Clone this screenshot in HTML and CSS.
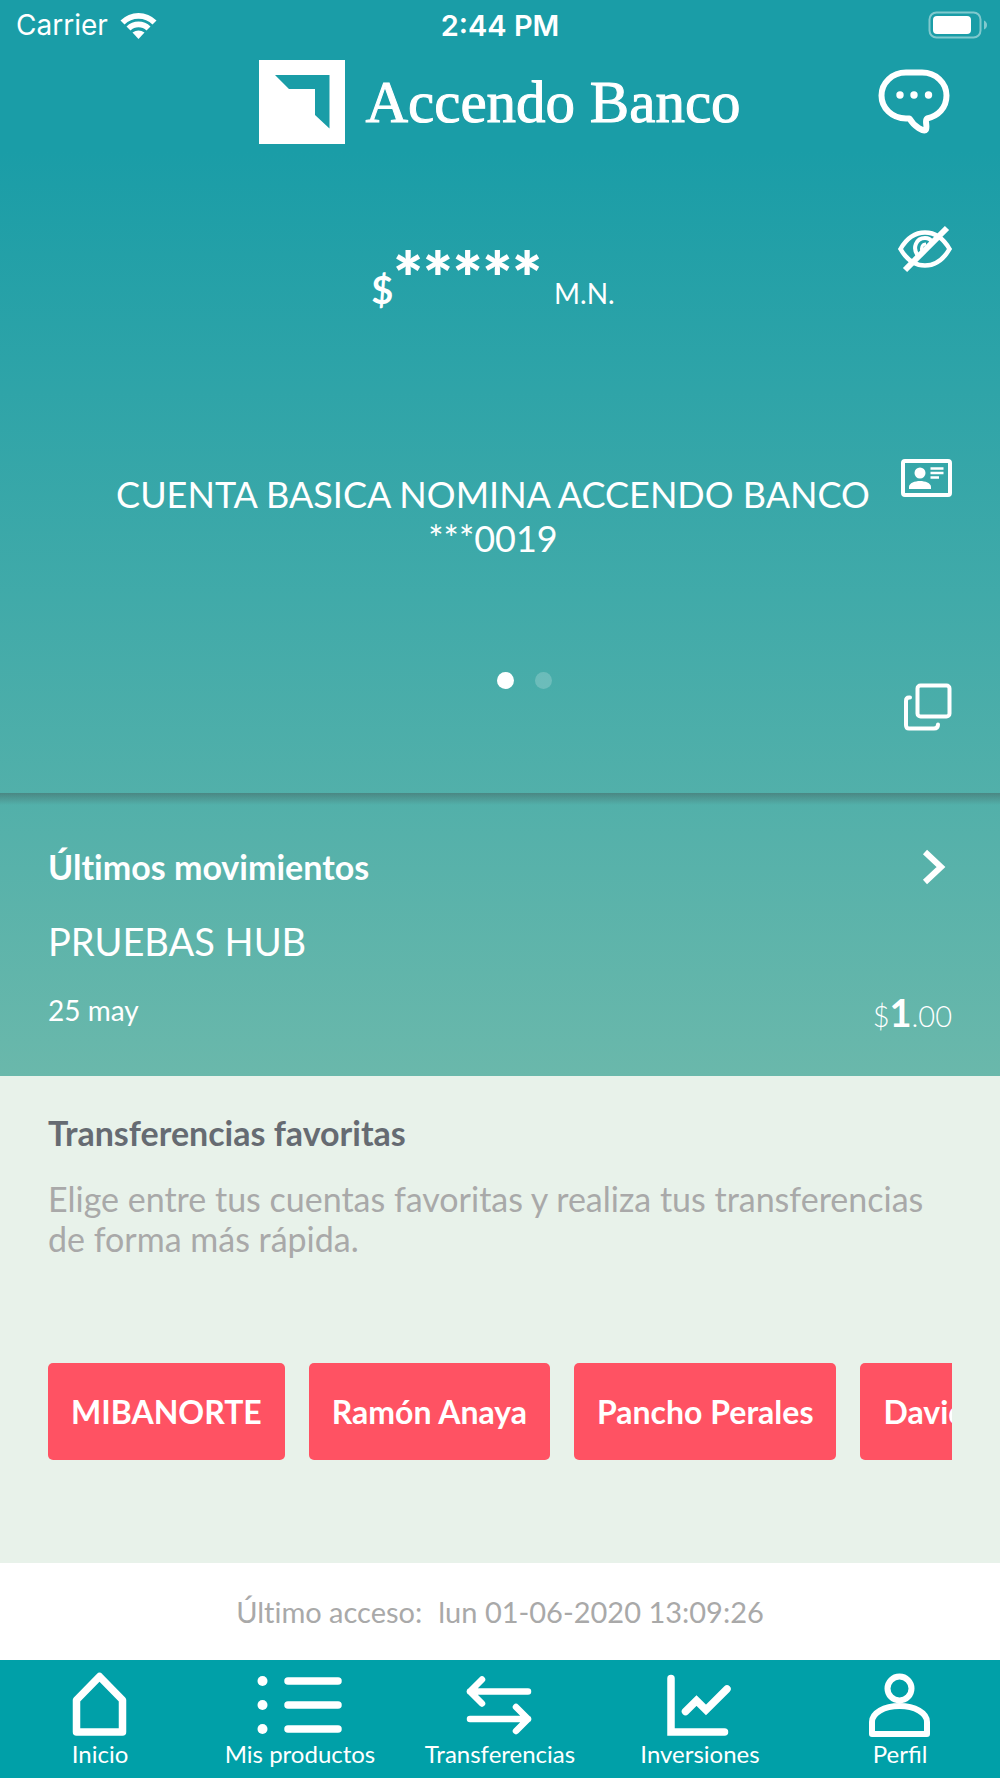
FILE: index.html
```html
<!DOCTYPE html>
<html lang="es">
<head>
    <meta charset="UTF-8">
    <meta name="viewport" content="width=device-width, initial-scale=1.0">
    <title>Accendo Banco</title>
    <link rel="stylesheet" href="styles.css">
</head>
<body>
    <div class="top">
        <div class="status-bar">
            <div class="carrier">
                <span>Carrier</span>
                <svg width="37" height="27" viewBox="0 0 37 27" fill="#fff">
                    <path d="M0.500 8.500A25.500 25.500 0 0 1 36.500 8.500L32.500 12.500A20 20 0 0 0 4.500 12.500Z"/>
                    <path d="M6.500 14.500A17 17 0 0 1 30.500 14.500L26.500 18.500A11.500 11.500 0 0 0 10.500 18.500Z"/>
                    <path d="M12.500 20.500Q18.500 16.500 24.500 20.500L18.500 27Z"/>
                </svg>
            </div>
            <div class="time">2:44 PM</div>
            <div class="battery">
                <svg width="60" height="28" viewBox="0 0 60 28">
                    <rect x="1.500" y="1.500" width="51" height="25" rx="7" fill="none" stroke="#fff" stroke-opacity="0.450" stroke-width="2"/>
                    <rect x="5" y="5" width="38" height="18" rx="4" fill="#fff"/>
                    <path d="M56 9.500Q59 11 59 14T56 18.500Z" fill="#fff" fill-opacity="0.450"/>
                </svg>
            </div>
        </div>

        <header class="header">
            <h1 class="logo">
                <svg width="86" height="84" viewBox="0 0 86 84">
                    <path fill="#fff" fill-rule="evenodd" d="M0 0H86V84H0ZM16 15L30 29H56V55L70.500 68.500V15Z"/>
                </svg>
                <span>Accendo Banco</span>
            </h1>
            <button class="icon-button chat" aria-label="Chat">
                <svg width="72" height="66" viewBox="0 0 72 66">
                    <path d="M28 3.500H44C58 3.500 68.500 14 68.500 26.500C68.500 39 60 47 49 49.500C46.500 51 49.500 57 48 60.500C46 63.500 36 57.500 31.500 49.500H28C14 49.500 3.500 39 3.500 26.500C3.500 14 14 3.500 28 3.500Z" fill="none" stroke="#fff" stroke-width="6" stroke-linejoin="round"/>
                    <circle cx="22" cy="26" r="3.700" fill="#fff"/>
                    <circle cx="36" cy="26" r="3.700" fill="#fff"/>
                    <circle cx="50.500" cy="26" r="3.700" fill="#fff"/>
                </svg>
            </button>
        </header>

        <section class="account">
            <div class="slide">
                <p class="balance">
                    <span class="currency">$</span><span class="amount">*****</span><span class="unit">M.N.</span>
                </p>
                <h2 class="account-name">
                    <span>CUENTA BASICA NOMINA ACCENDO BANCO</span>
                    <span>***0019</span>
                </h2>
            </div>
            <div class="actions">
                <button class="icon-button" aria-label="Mostrar saldo">
                    <svg width="54" height="48" viewBox="0 0 54 48" fill="none" stroke="#fff">
                        <path d="M2.500 24Q12 7.500 27 7.500T51.500 24Q42 40.500 27 40.500T2.500 24Z" stroke-width="4.500"/>
                        <path d="M20 31C14 23 18 13 27 13C31 13 33 15 34 17" stroke-width="4"/>
                        <path d="M28 19C24 19 22.500 23 24 27" stroke-width="3"/>
                        <path d="M7 45L49 3" stroke-width="6"/>
                    </svg>
                </button>
                <button class="icon-button" aria-label="Datos de la cuenta">
                    <svg width="52" height="40" viewBox="0 0 52 40">
                        <rect x="3" y="3" width="47" height="34" rx="2" fill="none" stroke="#fff" stroke-width="4"/>
                        <circle cx="20" cy="15" r="5.500" fill="#fff"/>
                        <path d="M9 31V29C9 25 15 23 20 23S31 25 31 29V31Z" fill="#fff"/>
                        <path d="M30.500 10.500H43.500M30.500 15H43.500M30.500 19.500H39" stroke="#fff" stroke-width="2.500"/>
                    </svg>
                </button>
                <button class="icon-button" aria-label="Copiar">
                    <svg width="48" height="48" viewBox="0 0 48 48" fill="none" stroke="#fff" stroke-width="4" stroke-linecap="round">
                        <rect x="13.500" y="2.500" width="32" height="31" rx="3"/>
                        <path d="M6 14.500H5Q2 14.500 2 18V42Q2 45.500 5 45.500H30Q34 45.500 34 41.500"/>
                    </svg>
                </button>
            </div>
            <div class="dots">
                <span class="dot active"></span>
                <span class="dot"></span>
            </div>
        </section>

        <section class="movements">
            <div class="row">
                <h2>Últimos movimientos</h2>
                <a href="#" class="more" aria-label="Ver movimientos">
                    <svg width="24" height="36" viewBox="0 0 24 36">
                        <path d="M3 3L19 18L3 33" fill="none" stroke="#fff" stroke-width="6"/>
                    </svg>
                </a>
            </div>
            <p class="concept">PRUEBAS HUB</p>
            <div class="row details">
                <span class="date">25 may</span>
                <span class="total">$<strong>1</strong>.00</span>
            </div>
        </section>
    </div>

    <section class="favorites">
        <h2>Transferencias favoritas</h2>
        <p>Elige entre tus cuentas favoritas y realiza tus transferencias de forma más rápida.</p>
        <div class="favorites-list">
            <button>MIBANORTE</button>
            <button>Ramón Anaya</button>
            <button>Pancho Perales</button>
            <button>David</button>
        </div>
    </section>

    <div class="last-access">
        <span>Último acceso:</span>
        <span>lun 01-06-2020 13:09:26</span>
    </div>

    <nav class="tabs">
        <a href="#">
            <svg width="88" height="66" viewBox="0 0 88 66" fill="none" stroke="#fff" stroke-width="7.500" stroke-linejoin="round">
                <path d="M43.500 5.500L66.500 29V61H20.500V29Z"/>
            </svg>
            Inicio
        </a>
        <a href="#">
            <svg width="88" height="66" viewBox="0 0 88 66" fill="#fff">
                <circle cx="6.500" cy="10" r="5"/>
                <circle cx="6.500" cy="34" r="5"/>
                <circle cx="6.500" cy="58" r="5"/>
                <path d="M32 10H82M32 34H82M32 58H82" stroke="#fff" stroke-width="7.500" stroke-linecap="round"/>
            </svg>
            Mis productos
        </a>
        <a href="#">
            <svg width="88" height="66" viewBox="0 0 88 66" fill="none" stroke="#fff" stroke-width="6.500" stroke-linecap="round" stroke-linejoin="round">
                <path d="M72 20.500H14M26 8.500L14 20.500L26 32.500"/>
                <path d="M14 48H72M60 36L72 48L60 60"/>
            </svg>
            Transferencias
        </a>
        <a href="#">
            <svg width="88" height="66" viewBox="0 0 88 66" fill="none" stroke="#fff" stroke-width="7.500" stroke-linecap="round">
                <path d="M15 7.500V61H68.500"/>
                <path d="M29.500 40.500L40.500 29.500L50 39L71 18"/>
            </svg>
            Inversiones
        </a>
        <a href="#">
            <svg width="88" height="66" viewBox="0 0 88 66" fill="none" stroke="#fff" stroke-width="6" stroke-linejoin="round">
                <circle cx="43.500" cy="17.500" r="12"/>
                <path d="M16 63V51C16 42 28 35 43.500 35S71 42 71 51V63Z"/>
            </svg>
            Perfil
        </a>
    </nav>
</body>
</html>
```
FILE: styles.css
```css
* {
    box-sizing: border-box;
}

body {
    font-family: Lato, sans-serif;
    font-variant-ligatures: no-common-ligatures;
    margin: 0;
    background-color: #fff;
    color: #fff;
}

h1, h2, p {
    margin: 0;
}

svg {
    display: block;
}

button {
    font-family: inherit;
    border: none;
    cursor: pointer;
}

a {
    color: inherit;
    text-decoration: none;
}

.top {
    background: linear-gradient(#1a9da7 14%, #6ab8ab);
}

/* Status bar */
.status-bar {
    display: grid;
    grid-template-columns: 1fr auto 1fr;
    align-items: center;
    height: 50px;
    padding: 0 12px;
    font-family: Inter, sans-serif;
    font-size: 28px;
}

.carrier {
    display: flex;
    align-items: center;
    gap: 12px;
    padding-left: 4px;
}

.time {
    font-size: 29px;
    font-weight: 600;
}

.battery {
    justify-self: end;
}

/* Header */
.header {
    display: grid;
    grid-template-columns: 1fr auto 1fr;
    align-items: center;
    padding: 10px 50px 0;
}

.logo {
    grid-column: 2;
    display: flex;
    align-items: center;
    gap: 20px;
    font-family: "Liberation Serif", serif;
    font-size: 59px;
    font-weight: normal;
    line-height: 84px;
    -webkit-text-stroke: 1px #fff;
}

.icon-button {
    background: none;
    padding: 0;
}

.chat {
    justify-self: end;
}

/* Account slider */
.account {
    display: grid;
    grid-template-columns: 1fr auto;
    grid-template-rows: 1fr auto;
    padding: 81px 48px 62px 88px;
}

.slide {
    text-align: center;
}

.balance {
    display: flex;
    justify-content: center;
    align-items: baseline;
    height: 247px;
    padding-top: 8px;
    line-height: 88px;
}

.currency {
    font-size: 38px;
    font-weight: bold;
}

.amount {
    font-size: 70px;
    font-weight: 800;
}

.unit {
    margin-left: 12px;
    font-size: 28px;
}

.account-name {
    font-size: 36px;
    font-weight: normal;
    line-height: 44px;
}

.account-name span {
    display: block;
}

.actions {
    grid-column: 2;
    grid-row: 1 / 3;
    display: flex;
    flex-direction: column;
    align-items: flex-end;
    justify-content: space-between;
    height: 506px;
}

.dots {
    display: flex;
    justify-content: center;
    gap: 21px;
    padding: 0 0 42px 62px;
}

.dot {
    width: 17px;
    height: 17px;
    border-radius: 50%;
    background-color: rgba(255, 255, 255, 0.2);
}

.dot.active {
    background-color: #fff;
}

/* Latest movements, under the shadow of the account section */
.movements {
    padding: 52px 48px 37px;
    background: linear-gradient(rgba(60, 60, 60, 0.35), rgba(60, 60, 60, 0) 12px);
}

.row {
    display: flex;
    justify-content: space-between;
    align-items: center;
}

.row h2 {
    font-size: 34px;
    line-height: 44px;
}

.more {
    padding-right: 6px;
}

.concept {
    padding: 30px 0 26px;
    font-size: 38px;
    line-height: 44px;
}

.details {
    align-items: flex-start;
}

.date {
    font-size: 28px;
    line-height: 42px;
}

.total {
    font-size: 29px;
    font-weight: 300;
    line-height: 46px;
}

.total strong {
    font-size: 38px;
    font-weight: bold;
}

/* Favorites */
.favorites {
    padding: 35px 48px 103px;
    background-color: #e8f2ea;
}

.favorites h2 {
    color: #666b72;
    font-size: 34px;
    line-height: 44px;
}

.favorites p {
    padding: 24px 0 0;
    color: #a9a9a9;
    font-size: 34px;
    line-height: 40px;
}

.favorites-list {
    display: flex;
    gap: 24px;
    padding-top: 104px;
    overflow: hidden;
}

.favorites-list button {
    flex: none;
    height: 97px;
    padding: 0 23px;
    border-radius: 5px;
    background-color: #ff5263;
    color: #fff;
    font-size: 32px;
    font-weight: bold;
}

.last-access {
    display: flex;
    justify-content: center;
    gap: 16px;
    padding: 30px 48px;
    color: #a9a9a9;
    font-size: 29px;
    line-height: 37px;
}

/* Tab bar */
.tabs {
    display: grid;
    grid-template-columns: repeat(5, 1fr);
    background-color: #00a0a8;
    font-variant-ligatures: normal;
}

.tabs a {
    display: flex;
    flex-direction: column;
    align-items: center;
    padding: 11px 0 8px;
    font-size: 24px;
    line-height: 33px;
}
```
